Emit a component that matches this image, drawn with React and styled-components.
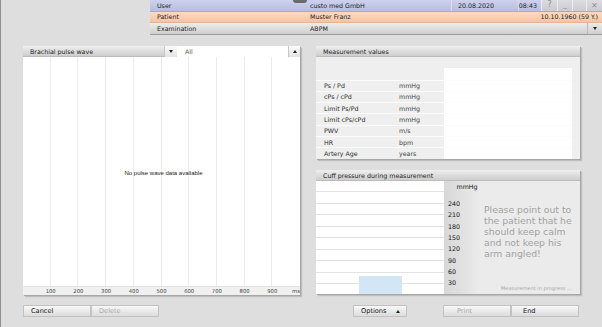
import React from 'react';
import styled, { createGlobalStyle } from 'styled-components';

const GlobalStyle = createGlobalStyle`
  html, body {
    margin: 0;
    padding: 0;
    background: #dedede;
  }
  body {
    font-family: "DejaVu Sans", Verdana, sans-serif;
    font-size: 6.3px;
    color: #222;
  }
`;

const Window = styled.div`
  width: 602px;
  height: 327px;
  box-sizing: border-box;
  border-left: 1px solid #8e8e8e;
  background: #dedede;
  overflow: hidden;
`;

const TopBar = styled.div`
  position: relative;
  margin-left: 149px;
  display: flex;
  flex-direction: column;
`;

const Notch = styled.div`
  position: absolute;
  left: 143px;
  top: 0;
  width: 14px;
  height: 3px;
  background: #6a6a6a;
  border-radius: 0 0 3px 3px;
`;

const InfoRow = styled.div`
  display: flex;
  height: 11.5px;
  box-sizing: border-box;
  border-bottom: 1px solid ${p => p.$line};
  background: ${p => p.$bg};
`;

const Label = styled.div`
  width: 150px;
  padding-left: 7px;
  box-sizing: border-box;
  display: flex;
  align-items: center;
`;

const Value = styled.div`
  flex: 1;
  display: flex;
  align-items: center;
  justify-content: space-between;
  padding: 0 4px 0 10px;
`;

const Cell = styled.div`
  width: ${p => p.$w}px;
  box-sizing: border-box;
  display: flex;
  align-items: center;
  justify-content: ${p => p.$justify || 'flex-start'};
  padding: 0 ${p => p.$pr || 0}px 0 ${p => p.$pl || 0}px;
  border-left: ${p => (p.$sep ? `1px solid ${p.$sep}` : 'none')};
  background: ${p => p.$bg || 'transparent'};
  color: ${p => p.$color || 'inherit'};
`;

const WinGlyph = styled.span`
  font-size: ${p => p.$size || 8}px;
  color: #8a8a8a;
  line-height: 1;
`;

const Tri = styled.span`
  width: 0;
  height: 0;
  border-left: 2.5px solid transparent;
  border-right: 2.5px solid transparent;
  ${p => (p.$up ? 'border-bottom: 3px solid #222;' : 'border-top: 3px solid #222;')}
`;

const Content = styled.div`
  display: flex;
  gap: 16px;
  padding: 11.5px 0 0 22px;
`;

const Column = styled.div`
  width: ${p => p.$w}px;
  display: flex;
  flex-direction: column;
  gap: ${p => p.$gap}px;
`;

const Panel = styled.div`
  display: flex;
  flex-direction: column;
  height: ${p => p.$h}px;
  background: ${p => p.$bg || '#efefef'};
  box-shadow: 1px 1px 0 #a7a7a7, 2px 2px 1px rgba(0, 0, 0, 0.14);
`;

const HeadBar = styled.div`
  display: flex;
  height: 11px;
  flex: 0 0 11px;
`;

const HeadTitle = styled.div`
  ${p => (p.$w ? `flex: 0 0 ${p.$w}px;` : 'flex: 1;')}
  box-sizing: border-box;
  display: flex;
  align-items: center;
  padding-left: 7px;
  background: linear-gradient(#efefef, #cdcdcd);
  border-bottom: 1px solid #bcbcbc;
`;

const ArrowBtn = styled.div`
  flex: 0 0 ${p => p.$w}px;
  display: flex;
  align-items: center;
  justify-content: center;
  background: linear-gradient(#fbfbfb, #e3e3e3);
  border-left: 1px solid #c6c6c6;
  box-sizing: border-box;
`;

const SelectField = styled.div`
  flex: 1;
  display: flex;
  align-items: center;
  padding-left: 8px;
  background: #fff;
  color: #555;
`;

const ChartStack = styled.div`
  flex: 1;
  display: grid;
  background: #fff;
  & > * {
    grid-area: 1 / 1;
  }
`;

const GridCols = styled.div`
  display: grid;
  grid-template-columns: repeat(10, 1fr);
`;

const GridCol = styled.div`
  border-right: 1px solid #ececec;
  &:last-child {
    border-right: none;
  }
`;

const NoData = styled.div`
  align-self: center;
  justify-self: center;
  margin: 2px 0 0 4px;
  font-family: "Liberation Sans", Arial, sans-serif;
  font-size: 6px;
  color: #222;
`;

const Axis = styled.div`
  flex: 0 0 8px;
  display: grid;
  grid-template-columns: 0.5fr repeat(9, 1fr) 0.5fr;
  align-items: center;
  background: #f0f0f0;
  border-top: 1px solid #e3e3e3;
  font-size: 5.3px;
  color: #444;
`;

const Tick = styled.span`
  text-align: ${p => p.$align || 'center'};
`;

const BtnRow = styled.div`
  display: flex;
  height: 12px;
  padding-left: ${p => p.$pl || 0}px;
  padding-right: ${p => p.$pr || 0}px;
`;

const Btn = styled.div`
  width: ${p => p.$w}px;
  height: 12px;
  box-sizing: border-box;
  display: flex;
  align-items: center;
  justify-content: space-between;
  padding: 0 6px 0 ${p => p.$pad}px;
  margin-left: ${p => p.$ml || 0};
  background: linear-gradient(#f8f8f8, #dcdcdc);
  border: 1px solid #c2c2c2;
  color: ${p => (p.$disabled ? '#a8a8a8' : '#111')};
  font-size: 6.6px;
`;

const MeasBody = styled.div`
  flex: 1;
  padding: 11px 8px 0 0;
`;

const TRow = styled.div`
  display: grid;
  grid-template-columns: 82px 46px 1fr;
  height: ${p => (p.$head ? 11.5 : 11.3)}px;
  box-sizing: border-box;
  border-top: ${p => (p.$head ? 'none' : '1px solid #fcfcfc')};
`;

const TCell = styled.div`
  display: flex;
  align-items: center;
  padding-left: ${p => p.$pl || 0}px;
  background: ${p => (p.$white ? '#fff' : 'transparent')};
  color: ${p => p.$color || '#2a2a2a'};
`;

const CuffBody = styled.div`
  display: flex;
  height: 113.3px;
`;

const CuffChart = styled.div`
  position: relative;
  width: 128px;
  display: flex;
  flex-direction: column;
  background: #fff;
`;

const CuffLine = styled.div`
  flex: 1;
  & + & {
    border-top: 1px solid #e3e3e3;
  }
`;

const PressureBar = styled.div`
  position: absolute;
  left: 43px;
  width: 43px;
  bottom: 0;
  background: #d3e6f6;
`;

const Scale = styled.div`
  width: 38px;
  display: flex;
  flex-direction: column;
  background: linear-gradient(to right, #d7d7d7, #ececec);
`;

const ScaleHead = styled.div`
  height: 11.33px;
  display: flex;
  align-items: center;
  padding-left: 12.5px;
  color: #111;
`;

const ScaleTicks = styled.div`
  padding-top: 5.67px;
`;

const ScaleTick = styled.div`
  height: 11.33px;
  display: flex;
  align-items: center;
  padding-left: 4px;
  color: #111;
`;

const Message = styled.div`
  flex: 1;
  display: flex;
  flex-direction: column;
  padding: 22.5px 2px 3.5px 2px;
  background: #ebebeb;
  color: #a2a2a2;
  font-size: 9.3px;
  line-height: 11.1px;
`;

const Status = styled.div`
  margin-top: auto;
  text-align: right;
  padding-right: 6px;
  font-size: 5.1px;
  line-height: 6px;
  color: #a8a8a8;
`;

const ticks = [100, 200, 300, 400, 500, 600, 700, 800, 900];
const scale = [240, 210, 180, 150, 120, 90, 60, 30];
const values = [
  ['Ps / Pd', 'mmHg'],
  ['cPs / cPd', 'mmHg'],
  ['Limit Ps/Pd', 'mmHg'],
  ['Limit cPs/cPd', 'mmHg'],
  ['PWV', 'm/s'],
  ['HR', 'bpm'],
  ['Artery Age', 'years'],
];

const cuffPressure = 48;
const pxPer30 = 11.33;

export default function App() {
  return (
    <>
      <GlobalStyle />
      <Window>
        <TopBar>
          <InfoRow $bg="linear-gradient(#cdd1ee, #b8bee1)" $line="#a5abcf">
            <Label>User</Label>
            <Cell $w={151} $pl={10}>custo med GmbH</Cell>
            <Cell $w={67} $pl={6} $sep="#dadef2">20.08.2020</Cell>
            <Cell $w={23} $pr={4} $justify="flex-end" $sep="#dadef2">08:43</Cell>
            <Cell $w={16} $justify="center" $sep="#ececf2" $bg="linear-gradient(#dcdce0, #cbcbd0)">
              <WinGlyph>?</WinGlyph>
            </Cell>
            <Cell $w={15} $justify="center" $sep="#ececf2" $bg="linear-gradient(#dcdce0, #cbcbd0)">
              <WinGlyph $size={7}>_</WinGlyph>
            </Cell>
            <Cell $w={14} $sep="#ececf2" $bg="linear-gradient(#dcdce0, #cbcbd0)" />
            <Cell $w={16} $justify="center" $sep="#ececf2" $bg="linear-gradient(#dcdce0, #cbcbd0)">
              <WinGlyph $size={7.5}>✕</WinGlyph>
            </Cell>
          </InfoRow>
          <InfoRow $bg="linear-gradient(#fcdac4, #f7c3a4)" $line="#e4b698">
            <Label>Patient</Label>
            <Value>
              <span>Muster Franz</span>
              <span>10.10.1960 (59 Y.)</span>
            </Value>
          </InfoRow>
          <InfoRow $bg="linear-gradient(#ececec, #cfcfcf)" $line="#9c9c9c">
            <Label>Examination</Label>
            <Value>ABPM</Value>
            <Cell $w={15} $justify="center" $sep="#b9b9b9">
              <Tri />
            </Cell>
          </InfoRow>
          <Notch />
        </TopBar>

        <Content>
          <Column $w={277} $gap={10}>
            <Panel $h={249} $bg="#fff">
              <HeadBar>
                <HeadTitle $w={141}>Brachial pulse wave</HeadTitle>
                <ArrowBtn $w={13}><Tri /></ArrowBtn>
                <SelectField>All</SelectField>
                <ArrowBtn $w={12}><Tri $up /></ArrowBtn>
              </HeadBar>
              <ChartStack>
                <GridCols>
                  {Array.from({ length: 10 }, (_, i) => <GridCol key={i} />)}
                </GridCols>
                <NoData>No pulse wave data available</NoData>
              </ChartStack>
              <Axis>
                <span />
                {ticks.map(t => <Tick key={t}>{t}</Tick>)}
                <Tick $align="right">ms</Tick>
              </Axis>
            </Panel>
            <BtnRow>
              <Btn $w={68} $pad={7}>Cancel</Btn>
              <Btn $w={68} $pad={7} $disabled>Delete</Btn>
            </BtnRow>
          </Column>

          <Column $w={264} $gap={11}>
            <Panel $h={113}>
              <HeadBar>
                <HeadTitle>Measurement values</HeadTitle>
              </HeadBar>
              <MeasBody>
                <TRow $head>
                  <TCell />
                  <TCell />
                  <TCell $white />
                </TRow>
                {values.map(([name, unit]) => (
                  <TRow key={name}>
                    <TCell $pl={8}>{name}</TCell>
                    <TCell $pl={1} $color="#444">{unit}</TCell>
                    <TCell $white />
                  </TRow>
                ))}
              </MeasBody>
            </Panel>
            <Panel $h={124.3}>
              <HeadBar>
                <HeadTitle>Cuff pressure during measurement</HeadTitle>
              </HeadBar>
              <CuffBody>
                <CuffChart>
                  {Array.from({ length: 10 }, (_, i) => <CuffLine key={i} />)}
                  <PressureBar style={{ height: `${(cuffPressure / 30) * pxPer30}px` }} />
                </CuffChart>
                <Scale>
                  <ScaleHead>mmHg</ScaleHead>
                  <ScaleTicks>
                    {scale.map(s => <ScaleTick key={s}>{s}</ScaleTick>)}
                  </ScaleTicks>
                </Scale>
                <Message>
                  <div>Please point out to the patient that he should keep calm and not keep his arm angled!</div>
                  <Status>Measurement in progress ...</Status>
                </Message>
              </CuffBody>
            </Panel>
            <BtnRow $pl={37} $pr={1}>
              <Btn $w={54} $pad={7}>Options<Tri $up /></Btn>
              <Btn $w={68} $pad={13} $ml="auto" $disabled>Print</Btn>
              <Btn $w={68} $pad={11}>End</Btn>
            </BtnRow>
          </Column>
        </Content>
      </Window>
    </>
  );
}
